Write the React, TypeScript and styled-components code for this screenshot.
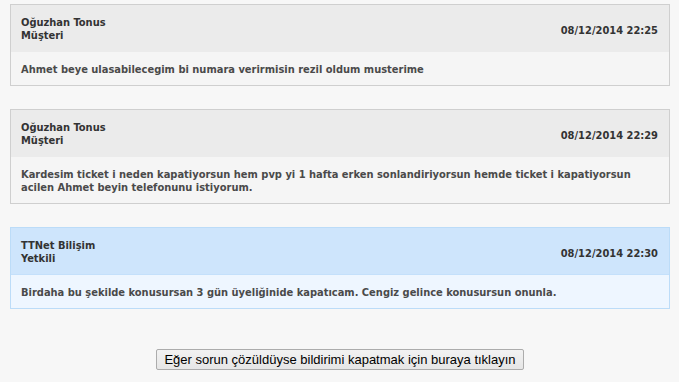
import React from "react";
import styled, {createGlobalStyle} from "styled-components";

interface IMessage {
  name: string;
  role: string;
  date: string;
  text: string;
  staff?: boolean;
}

const messages: IMessage[] = [
  {
    name: "Oğuzhan Tonus",
    role: "Müşteri",
    date: "08/12/2014 22:25",
    text: "Ahmet beye ulasabilecegim bi numara verirmisin rezil oldum musterime",
  },
  {
    name: "Oğuzhan Tonus",
    role: "Müşteri",
    date: "08/12/2014 22:29",
    text: "Kardesim ticket i neden kapatiyorsun hem pvp yi 1 hafta erken sonlandiriyorsun hemde ticket i kapatiyorsun acilen Ahmet beyin telefonunu istiyorum.",
  },
  {
    name: "TTNet Bilişim",
    role: "Yetkili",
    date: "08/12/2014 22:30",
    text: "Birdaha bu şekilde konusursan 3 gün üyeliğinide kapatıcam. Cengiz gelince konusursun onunla.",
    staff: true,
  },
];

const App = () => {
  return (
    <>
      <GlobalStyle/>
      <Page>
        {messages.map((m, i) => (
          <Card key={i} $staff={m.staff}>
            <CardHeader $staff={m.staff}>
              <Author>
                <span>{m.name}</span>
                <span>{m.role}</span>
              </Author>
              <DateText>{m.date}</DateText>
            </CardHeader>
            <CardBody $staff={m.staff}>{m.text}</CardBody>
          </Card>
        ))}
        <Actions>
          <CloseButton type="button">Eğer sorun çözüldüyse bildirimi kapatmak için buraya tıklayın</CloseButton>
        </Actions>
      </Page>
    </>
  )
}

export default App;


const GlobalStyle = createGlobalStyle`
  html, body {
    margin: 0;
    padding: 0;
    background: #f7f7f7;
  }
`

const Page = styled.div`
  padding: 4px 9px 0 10px;
  display: flex;
  flex-direction: column;
  gap: 23px;
  font-family: "DejaVu Sans Condensed", "DejaVu Sans", Verdana, sans-serif;
  font-stretch: condensed;
  font-size: 11px;
  font-weight: bold;
`

const Card = styled.div<{ $staff?: boolean }>`
  border: 1px solid ${({$staff}) => $staff ? "#bcdcf8" : "#cfcfcf"};
`

const CardHeader = styled.div<{ $staff?: boolean }>`
  display: flex;
  justify-content: space-between;
  align-items: center;
  padding: 11px 11px 9px 10px;
  background: ${({$staff}) => $staff ? "#cee5fc" : "#ebebeb"};
  color: #333;
  line-height: 13px;
`

const Author = styled.div`
  display: flex;
  flex-direction: column;
`

const DateText = styled.div`
  white-space: nowrap;
  margin-top: 2px;
`

const CardBody = styled.div<{ $staff?: boolean }>`
  padding: 11px 10px 9px;
  line-height: 13px;
  background: ${({$staff}) => $staff ? "#eef6ff" : "#f5f5f5"};
  color: #4a4a4a;
  border-top: 1px solid ${({$staff}) => $staff ? "#c4e0fb" : "#ebebeb"};
`

const Actions = styled.div`
  display: flex;
  justify-content: center;
  margin-top: 17px;
`

const CloseButton = styled.button`
  height: 21px;
  padding: 0 7px;
  font-family: "Liberation Sans", Arial, sans-serif;
  font-size: 13px;
  font-weight: normal;
  font-stretch: normal;
  color: #000;
  border: 1px solid #acacac;
  border-radius: 2px;
  background: linear-gradient(#f2f2f2, #e6e6e6);
`
